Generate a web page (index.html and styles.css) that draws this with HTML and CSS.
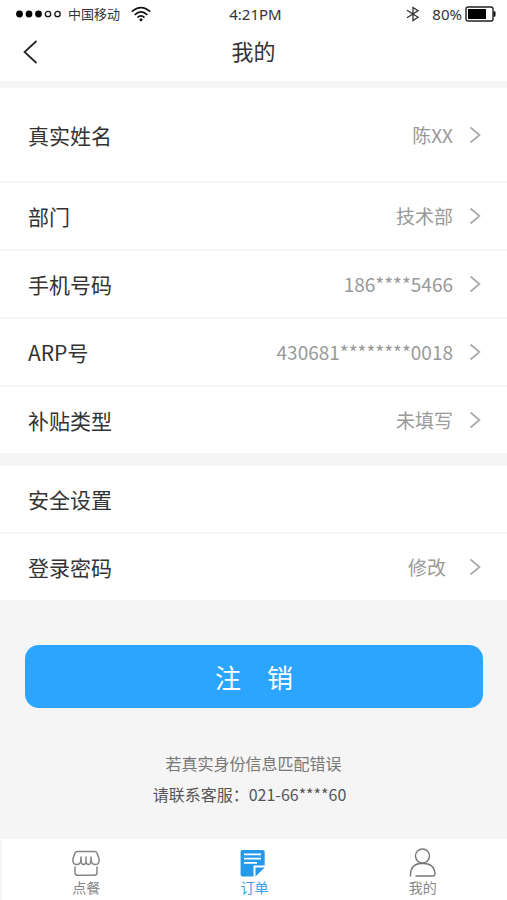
FILE: index.html
```html
<!DOCTYPE html>
<html lang="zh-CN">
<head>
<meta charset="utf-8">
<meta name="viewport" content="width=device-width, initial-scale=1">
<title>我的</title>
<link rel="stylesheet" href="styles.css">
</head>
<body>
<svg class="sprite" aria-hidden="true">
  <symbol id="chevron" viewBox="0 0 12 18">
    <path d="M1.500 1.500 10.500 9 1.500 16.500" fill="none" stroke="currentColor" stroke-width="1.700"/>
  </symbol>
</svg>
<div class="page">
  <div class="status">
    <div class="carrier">
      <svg class="signal" viewBox="0 0 46 8" aria-hidden="true">
        <g fill="#000"><circle cx="4.500" cy="4" r="3.400"/><circle cx="14" cy="4" r="3.400"/><circle cx="23.500" cy="4" r="3.400"/></g>
        <g fill="none" stroke="#111" stroke-width="1.300"><circle cx="33" cy="4" r="2.700"/><circle cx="42.500" cy="4" r="2.700"/></g>
      </svg>
      <span class="carrier-name">中国移动</span>
      <svg class="wifi" viewBox="0 0 20 16" aria-hidden="true">
        <g fill="none" stroke="#111" stroke-width="1.600">
          <path d="M.7 5.700Q10-2.500 19.300 5.700"/>
          <path d="M3.700 8.800Q10 3 16.300 8.800"/>
          <path d="M6.500 11.600Q10 8.300 13.500 11.600"/>
        </g>
        <circle cx="10" cy="13.700" r="1.500" fill="#111"/>
      </svg>
    </div>
    <span class="clock">4:21PM</span>
    <div class="power">
      <svg class="bluetooth" viewBox="0 0 14 16" aria-hidden="true">
        <path d="M1 4.200 12 11.300 7 14.500V1.500L12 4.700 1 11.800" fill="none" stroke="#333" stroke-width="1.300"/>
      </svg>
      <span>80%</span>
      <svg class="battery" viewBox="0 0 31 16" aria-hidden="true">
        <rect x="1" y="1" width="27" height="14" rx="2" fill="none" stroke="#222" stroke-width="1.400"/>
        <rect x="3" y="3" width="18" height="10" fill="#000"/>
        <path d="M28.500 5.300h1q1 0 1 1v3.400q0 1-1 1h-1z" fill="#111"/>
      </svg>
    </div>
  </div>
  <header class="header">
    <a class="back" href="#" aria-label="返回">
      <svg viewBox="0 0 16 24" aria-hidden="true"><path d="M13.500 1 1.500 12 13.500 23" fill="none" stroke="#222" stroke-width="1.700"/></svg>
    </a>
    <h1 class="title">我的</h1>
  </header>
  <main class="main">
    <nav class="group">
      <a class="row row-tall" href="#"><span class="label">真实姓名</span><span class="value">陈XX</span><svg class="chevron"><use href="#chevron"/></svg></a>
      <a class="row" href="#"><span class="label">部门</span><span class="value">技术部</span><svg class="chevron"><use href="#chevron"/></svg></a>
      <a class="row" href="#"><span class="label">手机号码</span><span class="value">186****5466</span><svg class="chevron"><use href="#chevron"/></svg></a>
      <a class="row" href="#"><span class="label">ARP号</span><span class="value">430681********0018</span><svg class="chevron"><use href="#chevron"/></svg></a>
      <a class="row" href="#"><span class="label">补贴类型</span><span class="value">未填写</span><svg class="chevron"><use href="#chevron"/></svg></a>
    </nav>
    <section class="group">
      <h2 class="row label">安全设置</h2>
      <a class="row" href="#"><span class="label">登录密码</span><span class="value value-action">修改</span><svg class="chevron"><use href="#chevron"/></svg></a>
    </section>
    <button class="logout" type="button">注　销</button>
    <div class="notes">
      <p class="note">若真实身份信息匹配错误</p>
      <p class="note note-contact">请联系客服：021-66****60</p>
    </div>
  </main>
  <nav class="tabs">
    <a class="tab" href="#">
      <svg class="tab-icon" viewBox="0 0 32 30" aria-hidden="true">
        <g fill="none" stroke="#858585" stroke-width="1.500" stroke-linejoin="round" stroke-linecap="round">
          <path d="M7.500 3.500H24.500Q26.300 3.500 27 5L29 10.500Q30 16.300 25.500 16.500Q21 16.500 21 11.500V9M11 9V11.500Q11 16.500 6.500 16.500Q2 16.300 3 10.500L5 5Q5.700 3.500 7.500 3.500"/>
          <path d="M11 11.500Q11 16.500 13.500 16.500Q16 16.500 16 12.500Q16 16.500 18.500 16.500Q21 16.500 21 11.500M16 9V12.500"/>
          <path d="M5 19V24.500Q5 27.300 7.500 27.300H24.500Q27 27.300 27 24.500V19"/>
        </g>
      </svg>
      <span>点餐</span>
    </a>
    <a class="tab tab-active" href="#" aria-current="page">
      <svg class="tab-icon" viewBox="0 0 32 30" aria-hidden="true">
        <path d="M4.300 2H25Q26.700 2 26.700 3.700V17.500H15.500V28.500H4.300Q2.600 28.500 2.600 26.800V3.700Q2.600 2 4.300 2Z" fill="#2799ea"/>
        <path d="M17.500 19.500H26.700L17.500 28.500Z" fill="#2799ea"/>
        <path d="M6 6.300H23M6 10.600H23M6 14.900H19" stroke="#fff" stroke-width="1.700"/>
      </svg>
      <span>订单</span>
    </a>
    <a class="tab" href="#">
      <svg class="tab-icon" viewBox="0 0 32 30" aria-hidden="true">
        <g fill="none" stroke="#777" stroke-width="1.400" stroke-linecap="round">
          <circle cx="15.500" cy="8" r="7"/>
          <path d="M3.500 28V26Q4 15.500 15.500 15.300Q27 15.500 28 25Q28.300 28 25.500 28H9"/>
        </g>
      </svg>
      <span>我的</span>
    </a>
  </nav>
</div>
</body>
</html>
```
FILE: styles.css
```css
* {
  box-sizing: border-box;
}

body {
  margin: 0;
  background: #f5f5f5;
  color: #333;
  font-family: "Noto Sans CJK SC", "Noto Sans", sans-serif;
}

a {
  color: inherit;
  text-decoration: none;
}

svg {
  display: block;
  flex: none;
}

.sprite {
  position: absolute;
  width: 0;
  height: 0;
}

.page {
  display: flex;
  flex-direction: column;
  min-height: 100vh;
}

.status {
  display: grid;
  grid-template-columns: 1fr auto 1fr;
  align-items: center;
  height: 27px;
  padding: 0 11px 0 15px;
  background: #fff;
  font-family: "Noto Sans", "Noto Sans CJK SC", sans-serif;
  font-size: 15px;
  line-height: 20px;
}

.carrier,
.power {
  display: flex;
  align-items: center;
}

.power {
  justify-content: flex-end;
}

.signal {
  width: 46px;
  height: 8px;
}

.carrier-name {
  margin: 0 11px 0 7px;
  font-size: 13px;
}

.wifi {
  width: 20px;
  height: 16px;
}

.bluetooth {
  width: 14px;
  height: 16px;
  margin-right: 12px;
}

.battery {
  width: 31px;
  height: 16px;
  margin-left: 3px;
}

.header {
  display: grid;
  grid-template-columns: 48px 1fr 48px;
  align-items: center;
  height: 54px;
  padding-bottom: 4px;
  background: #fff;
}

.back {
  padding-left: 23px;
}

.back svg {
  width: 16px;
  height: 24px;
}

.title {
  margin: 0;
  padding-bottom: 4px;
  font-size: 22px;
  font-weight: 400;
  line-height: 32px;
  text-align: center;
}

.main {
  flex: 1;
  padding-top: 7px;
}

.group {
  margin-bottom: 13px;
  background: #fff;
}

.row {
  display: flex;
  align-items: center;
  height: 68px;
  margin: 0;
  padding: 0 26px 0 28px;
  border-bottom: 2px solid #f5f5f5;
}

.row-tall {
  height: 95px;
}

.row:last-child {
  height: 66px;
  border-bottom: 0;
}

.label {
  font-size: 21px;
  font-weight: 400;
  line-height: 32px;
}

.value {
  margin-left: auto;
  color: #999;
  font-size: 19px;
  line-height: 28px;
}

.value-action {
  padding-right: 7px;
}

.chevron {
  width: 12px;
  height: 18px;
  margin-left: 16px;
  color: #aaa;
}

.logout {
  display: block;
  width: calc(100% - 49px);
  height: 63px;
  margin: 45px 24px 0 25px;
  padding: 0;
  border: 0;
  border-radius: 14px;
  background: #2ba5ff;
  color: #fff;
  font-family: inherit;
  font-size: 26px;
  line-height: 38px;
}

.notes {
  margin: 40px 0 20px;
  text-align: center;
}

.note {
  margin: 0;
  color: #777;
  font-size: 16px;
  line-height: 31px;
}

.note-contact {
  padding-right: 8px;
  color: #555;
}

.tabs {
  display: grid;
  grid-template-columns: repeat(3, 1fr);
  height: 61px;
  margin-left: 2px;
  background: #fff;
}

.tab {
  display: flex;
  flex-direction: column;
  align-items: center;
  padding-top: 9px;
  color: #888;
  font-size: 14px;
  line-height: 18px;
}

.tab-active {
  color: #3d9fe6;
}

.tab-icon {
  width: 32px;
  height: 30px;
}
```
